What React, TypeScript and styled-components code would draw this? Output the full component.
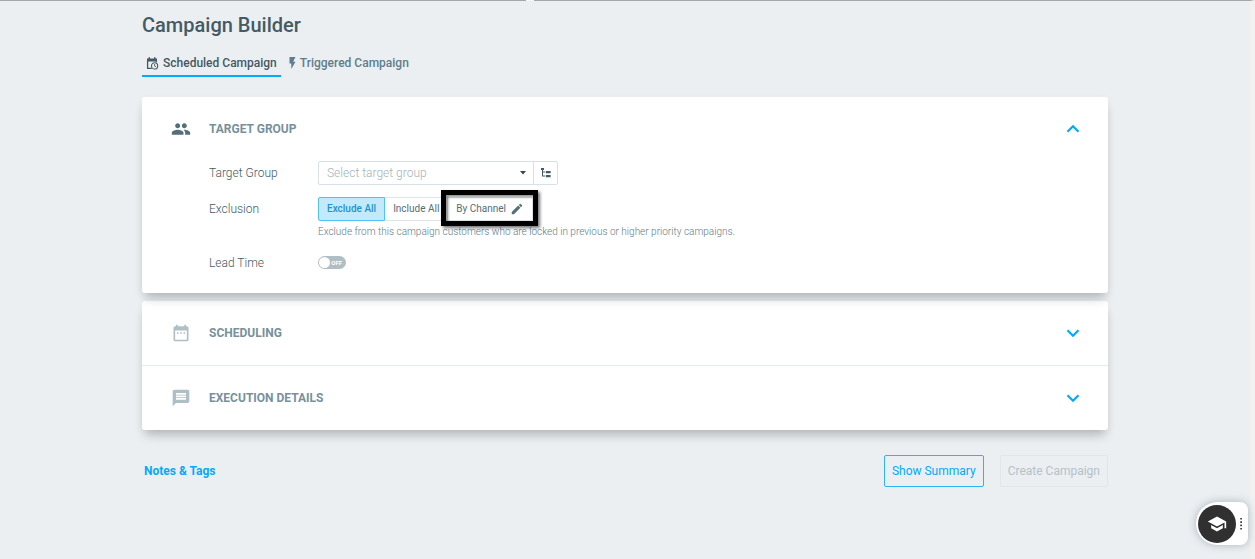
import React from "react";
import styled, { createGlobalStyle } from "styled-components";
import { MdPeople, MdDateRange, MdMessage, MdEdit, MdSchool } from "react-icons/md";

const accent = "#03a9fc";

const GlobalStyle = createGlobalStyle`
  * { box-sizing: border-box; }
  body {
    margin: 0;
    background: #ebeff2;
    color: #607d8b;
    font-family: Roboto, "Liberation Sans", sans-serif;
    font-size: 12px;
    line-height: 16px;
  }
  button, input { font: inherit; color: inherit; margin: 0; }
  button { cursor: pointer; }
  #root { min-height: 100vh; display: flex; }
`;

const Shell = styled.div`
  flex: 1;
  border-top: 1px solid #a3a7ab;
  border-right: 5px solid #f1f1f1;
  position: relative;
`;

const TopNotch = styled.span`
  position: absolute;
  top: -1px;
  left: 526px;
  width: 8px;
  height: 1px;
  background: #f4f6f8;
`;

const Page = styled.main`
  width: calc(100% - 48px);
  max-width: 966px;
  margin: 0 auto;
  padding: 12px 0 24px;
`;

const Title = styled.h1`
  margin: 0;
  font-size: 20px;
  line-height: 24px;
  font-weight: 500;
  color: #455a64;
`;

const Tabs = styled.nav`
  display: flex;
  gap: 4px;
  margin-top: 12px;
`;

const Tab = styled.a<{ $active?: boolean }>`
  display: flex;
  align-items: center;
  gap: 4px;
  height: 28px;
  padding: 2px 4px 0;
  border-bottom: 2px solid ${(p) => (p.$active ? accent : "transparent")};
  color: ${(p) => (p.$active ? "#455a64" : "#607d8b")};
  font-weight: 500;
  text-decoration: none;
`;

const Card = styled.section<{ $open?: boolean }>`
  position: relative;
  z-index: ${(p) => (p.$open ? 1 : 0)};
  margin-top: ${(p) => (p.$open ? 20 : 8)}px;
  padding-bottom: ${(p) => (p.$open ? 18 : 0)}px;
  border-radius: 3px;
  background: #fff;
  box-shadow: 0 8px 10px -3px rgba(0, 0, 0, 0.22), 0 2px 8px rgba(0, 0, 0, 0.04);
`;

const PanelHeader = styled.button<{ $divided?: boolean }>`
  display: grid;
  grid-template-columns: 20px 1fr 14px;
  column-gap: 18px;
  align-items: center;
  width: 100%;
  height: ${(p) => (p.$divided ? 65 : 64)}px;
  padding: 0 28px 0 29px;
  border: 0;
  border-bottom: ${(p) => (p.$divided ? "1px solid #e4ebee" : "0")};
  background: none;
  text-align: left;
`;

const PanelTitle = styled.span`
  color: #78909c;
  font-weight: 700;
`;

const Form = styled.div`
  display: grid;
  grid-template-columns: 109px 1fr;
  align-items: start;
  row-gap: 12px;
  padding: 0 24px 0 67px;
`;

const FieldLabel = styled.label`
  line-height: 24px;
  font-weight: 300;
  color: #455a64;
`;

const Row = styled.div`
  display: flex;
`;

const PickerBox = styled.div`
  display: flex;
  align-items: center;
  width: 216px;
  height: 24px;
  padding-right: 7px;
  border: 1px solid #d8e1e5;
  border-radius: 2px 0 0 2px;
`;

const PickerInput = styled.input`
  flex: 1;
  min-width: 0;
  height: 22px;
  padding: 0 8px;
  border: 0;
  outline: 0;
  background: none;
  font-weight: 300;
  &::placeholder { color: #a3b4bc; opacity: 1; }
`;

const TreeButton = styled.button`
  display: grid;
  place-items: center;
  width: 25px;
  height: 24px;
  margin-left: -1px;
  padding: 0;
  border: 1px solid #d8e1e5;
  border-radius: 0 2px 2px 0;
  background: #fff;
`;

const Segment = styled.button<{ $selected?: boolean }>`
  position: relative;
  display: flex;
  align-items: center;
  gap: 4px;
  height: 24px;
  padding: 0 8px;
  border: 1px solid ${(p) => (p.$selected ? "#4fc3f7" : "#dfe6e9")};
  border-left-width: ${(p) => (p.$selected ? 1 : 0)}px;
  background: ${(p) => (p.$selected ? "#c3e9fd" : "#fff")};
  color: ${(p) => (p.$selected ? "#1e94d2" : "#546e7a")};
  font-size: 10px;
  font-weight: ${(p) => (p.$selected ? 500 : 400)};
  &:first-child { border-radius: 2px 0 0 2px; }
  &:last-child { border-radius: 0 2px 2px 0; }
`;

const Highlight = styled.span`
  position: absolute;
  inset: -8px -6px -6px -7px;
  border: 5px solid #000;
  box-shadow: 2px 2px 3px rgba(0, 0, 0, 0.55), inset 2px 2px 3px rgba(0, 0, 0, 0.45);
  pointer-events: none;
`;

const Hint = styled.p`
  margin: 4px 0 0;
  font-size: 10px;
  line-height: 14px;
  font-weight: 300;
  color: #607d8b;
`;

const Switch = styled.label`
  position: relative;
  display: flex;
  align-items: center;
  justify-content: flex-end;
  width: 28px;
  height: 13px;
  margin-top: 5px;
  padding-right: 4px;
  border-radius: 7px;
  background: #b0bec5;
  color: #fff;
  font-size: 6px;
  line-height: 13px;
  font-weight: 700;
  cursor: pointer;
`;

const SwitchInput = styled.input`
  appearance: none;
  position: absolute;
  top: 1px;
  left: 1px;
  width: 11px;
  height: 11px;
  border-radius: 50%;
  background: #fff;
`;

const Footer = styled.footer`
  display: flex;
  align-items: center;
  gap: 16px;
  margin-top: 25px;
`;

const NotesLink = styled.a`
  margin-right: auto;
  padding-left: 2px;
  color: ${accent};
  font-weight: 700;
  text-decoration: none;
`;

const FooterButton = styled.button`
  height: 32px;
  padding: 0 7px;
  border: 1px solid #29b6f6;
  border-radius: 2px;
  background: none;
  color: ${accent};
  &:disabled {
    border-color: #e2e6e8;
    color: #b5c1c7;
    cursor: default;
  }
`;

const HelpDock = styled.aside`
  position: fixed;
  right: 7px;
  bottom: 14px;
  display: flex;
  align-items: center;
  gap: 4px;
  width: 52px;
  height: 43px;
  padding-left: 2px;
  border-radius: 22px 8px 8px 22px;
  background: #fff;
  box-shadow: 0 0 8px rgba(69, 90, 100, 0.4);
`;

const HelpButton = styled.button`
  display: grid;
  place-items: center;
  flex: none;
  width: 38px;
  height: 38px;
  padding: 0;
  border: 0;
  border-radius: 50%;
  background: #303030;
  color: #fff;
`;

const CalendarClock = () => (
  <svg width="13" height="13" viewBox="0 0 13 13" fill="none" stroke="currentColor" aria-hidden="true">
    <path d="M1.6 4V11.3H5.8M10.4 4V5.2" strokeWidth="1.3" />
    <path d="M1 1.4H11V4.6H1ZM2.5.3H4V2H2.5ZM8 .3H9.5V2H8Z" fill="currentColor" stroke="none" />
    <circle cx="8.6" cy="8.9" r="3.1" strokeWidth="1.1" />
    <path d="M8.6 7.1V9.1L10 9.8" strokeWidth=".9" />
  </svg>
);

const Bolt = () => (
  <svg width="7" height="12" viewBox="7 2 10 20" fill="currentColor" aria-hidden="true">
    <path d="M7 2v11h3v9l7-12h-4l4-8z" />
  </svg>
);

const Tree = () => (
  <svg width="11" height="10" viewBox="0 0 11 10" fill="#455a64" aria-hidden="true">
    <path d="M1 0H4V2H1ZM2 2H3V3.6H5.4V4.6H3V7.6H5.4V8.6H2ZM6 3H10.6V5.2H6ZM6 7H10.6V9.2H6Z" />
  </svg>
);

const Caret = () => (
  <svg width="6" height="4" viewBox="0 0 6 4" fill="#37474f" aria-hidden="true">
    <path d="M0 0H6L3 3.6Z" />
  </svg>
);

const Chevron = ({ up }: { up?: boolean }) => (
  <svg width="14" height="10" viewBox="0 0 14 10" fill="none" stroke={accent} strokeWidth="2.2" aria-hidden="true">
    <path d={up ? "M1.5 7.8L7 2.3L12.5 7.8" : "M1.5 2.2L7 7.7L12.5 2.2"} />
  </svg>
);

const Dots = () => (
  <svg width="3" height="12" viewBox="0 0 3 12" fill="#303030" aria-hidden="true">
    <path d="M.3 0H1.9V1.6H.3ZM.3 3.3H1.9V4.9H.3ZM.3 6.6H1.9V8.2H.3ZM.3 9.9H1.9V11.5H.3Z" />
  </svg>
);

export default function App() {
  return (
    <>
      <GlobalStyle />
      <Shell>
        <TopNotch />
        <Page>
          <Title>Campaign Builder</Title>
          <Tabs>
            <Tab href="#scheduled" $active><CalendarClock />Scheduled Campaign</Tab>
            <Tab href="#triggered"><Bolt />Triggered Campaign</Tab>
          </Tabs>

          <Card $open>
            <PanelHeader aria-expanded="true">
              <MdPeople size={20} color="#546e7a" />
              <PanelTitle>TARGET GROUP</PanelTitle>
              <Chevron up />
            </PanelHeader>
            <Form>
              <FieldLabel htmlFor="target-group">Target Group</FieldLabel>
              <Row>
                <PickerBox>
                  <PickerInput id="target-group" placeholder="Select target group" />
                  <Caret />
                </PickerBox>
                <TreeButton aria-label="Browse target groups"><Tree /></TreeButton>
              </Row>

              <FieldLabel as="span" id="exclusion">Exclusion</FieldLabel>
              <div>
                <Row role="group" aria-labelledby="exclusion">
                  <Segment $selected aria-pressed="true">Exclude All</Segment>
                  <Segment>Include All</Segment>
                  <Segment>By Channel<MdEdit size={14} /><Highlight /></Segment>
                </Row>
                <Hint>Exclude from this campaign customers who are locked in previous or higher priority campaigns.</Hint>
              </div>

              <FieldLabel htmlFor="lead-time">Lead Time</FieldLabel>
              <Switch>
                <SwitchInput id="lead-time" type="checkbox" role="switch" />
                OFF
              </Switch>
            </Form>
          </Card>

          <Card>
            <PanelHeader $divided aria-expanded="false">
              <MdDateRange size={20} color="#b0bec5" />
              <PanelTitle>SCHEDULING</PanelTitle>
              <Chevron />
            </PanelHeader>
            <PanelHeader aria-expanded="false">
              <MdMessage size={20} color="#b0bec5" />
              <PanelTitle>EXECUTION DETAILS</PanelTitle>
              <Chevron />
            </PanelHeader>
          </Card>

          <Footer>
            <NotesLink href="#notes">Notes &amp; Tags</NotesLink>
            <FooterButton>Show Summary</FooterButton>
            <FooterButton disabled>Create Campaign</FooterButton>
          </Footer>
        </Page>
        <HelpDock>
          <HelpButton aria-label="Help"><MdSchool size={20} /></HelpButton>
          <Dots />
        </HelpDock>
      </Shell>
    </>
  );
}
